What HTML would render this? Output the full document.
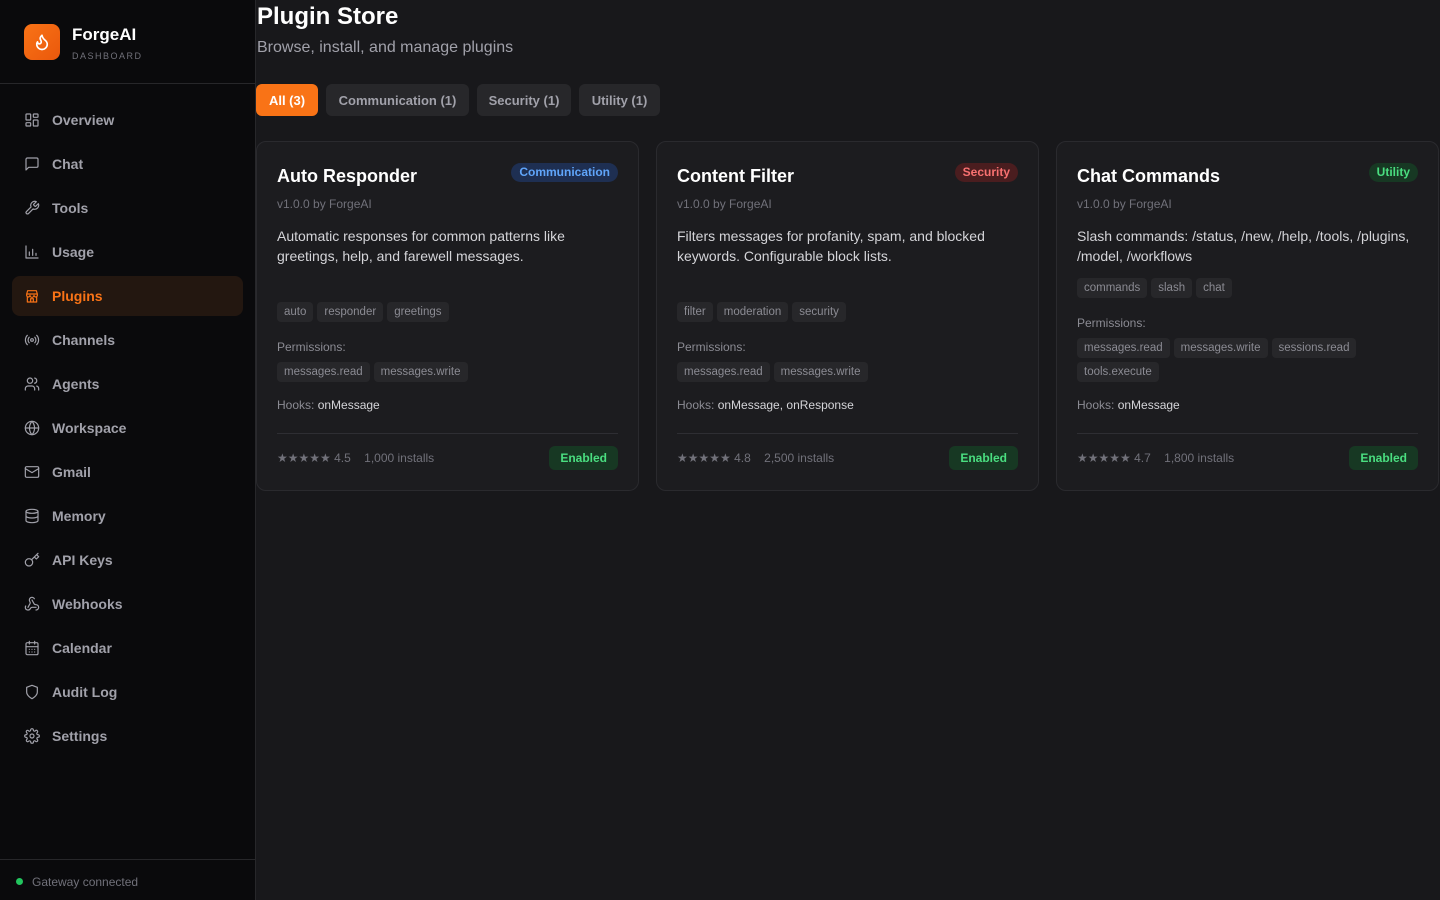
<!DOCTYPE html>
<html><head><meta charset="utf-8"><style>
*{box-sizing:border-box;margin:0;padding:0}
body{width:1440px;height:900px;background:#18181b;font-family:"Liberation Sans",sans-serif;color:#e4e4e7;overflow:hidden;position:relative}
.side{position:absolute;left:0;top:0;width:256px;height:900px;background:#0a0a0c;border-right:1px solid #27272a}
.logo{position:absolute;left:24px;top:24px;width:36px;height:36px;border-radius:8px;background:linear-gradient(135deg,#f97316,#ea580c);display:flex;align-items:center;justify-content:center}
.brand{position:absolute;left:72px;top:25px;font-size:17px;font-weight:bold;color:#fff}
.sub{position:absolute;left:72px;top:51px;font-size:9px;letter-spacing:1.5px;color:#71717a}
.hr{position:absolute;left:0;top:83px;width:255px;border-top:1px solid #27272a}
.nav{position:absolute;left:12px;width:231px;height:40px;border-radius:8px;display:flex;align-items:center;padding-left:12px;font-size:14px;font-weight:bold;color:#a1a1aa}
.nav svg{width:16px;height:16px;margin-right:12px;stroke:#a1a1aa;fill:none;stroke-width:1.8;stroke-linecap:round;stroke-linejoin:round}
.nav.act{background:#231710;color:#f97316}.nav.act svg{stroke:#f97316}
.foot{position:absolute;left:0;top:859px;width:255px;border-top:1px solid #27272a;padding:15px 0 0 16px;font-size:12px;color:#71717a}
.foot i{display:inline-block;width:7px;height:7px;border-radius:50%;background:#22c55e;margin-right:9px;vertical-align:1px}
h1{position:absolute;left:257px;top:3px;font-size:24px;color:#fff}
.desc{position:absolute;left:257px;top:39px;font-size:16px;color:#a1a1aa}
.tab{position:absolute;top:84px;height:32px;border-radius:6px;background:#27272a;color:#a1a1aa;font-size:13px;font-weight:bold;display:flex;align-items:center;justify-content:center;white-space:nowrap}
.card{position:absolute;top:141px;width:383px;height:350px;border:1px solid #2a2a2e;border-radius:10px;background:#1c1c1f;padding:20px}
.card h3{font-size:18px;line-height:28px;color:#fff}
.badge{position:absolute;right:20px;top:21px;height:19px;border-radius:10px;font-size:12px;font-weight:bold;padding:0 8px;line-height:19px}
.ver{margin-top:5px;font-size:12px;line-height:18px;color:#71717a}
.d{margin-top:13px;font-size:14px;line-height:20px;color:#d4d4d8;height:40px}
.tags span{display:inline-block;height:20px;line-height:20px;padding:0 7px;background:#27272a;color:#8b8b93;font-size:11.5px;border-radius:4px;margin-right:4px;margin-bottom:4px}
.lab{font-size:12px;line-height:18px;color:#8b8b93}
.hooks{position:absolute;left:20px;top:256px;font-size:12px;color:#8b8b93}.hooks b{font-weight:normal;color:#d4d4d8}
.div{position:absolute;left:20px;right:20px;top:291px;border-top:1px solid #2e2e33}
.rate{position:absolute;left:20px;top:309px;font-size:12px;color:#71717a}
.en{position:absolute;right:20px;top:304px;height:24px;line-height:24px;padding:0 11px;border-radius:6px;background:#173823;color:#4ade80;font-size:12px;font-weight:bold}
</style></head><body>
<div class="side">
<div class="logo"><svg width="18" height="18" viewBox="0 0 24 24" fill="none" stroke="#fff" stroke-width="2.2" stroke-linecap="round" stroke-linejoin="round"><path d="M8.5 14.5A2.5 2.5 0 0 0 11 12c0-1.4-.5-2-1-3-1.1-2.1-.2-4 2-6 .5 2.5 2 4.9 4 6.5 2 1.6 3 3.5 3 5.5a7 7 0 1 1-14 0c0-1.2.4-2.3 1-3.2.2 1.5 1.2 2.7 2.5 2.7z"/></svg></div>
<div class="brand">ForgeAI</div><div class="sub">DASHBOARD</div>
<div class="hr"></div>
<div class="nav" style="top:100px"><svg viewBox="0 0 24 24"><rect x="3" y="3" width="7" height="9" rx="1"/><rect x="14" y="3" width="7" height="5" rx="1"/><rect x="14" y="12" width="7" height="9" rx="1"/><rect x="3" y="16" width="7" height="5" rx="1"/></svg>Overview</div>
<div class="nav" style="top:144px"><svg viewBox="0 0 24 24"><path d="M21 15a2 2 0 0 1-2 2H7l-4 4V5a2 2 0 0 1 2-2h14a2 2 0 0 1 2 2z"/></svg>Chat</div>
<div class="nav" style="top:188px"><svg viewBox="0 0 24 24"><path d="M14.7 6.3a1 1 0 0 0 0 1.4l1.6 1.6a1 1 0 0 0 1.4 0l3.8-3.8a6 6 0 0 1-7.9 7.9l-6.9 6.9a2.1 2.1 0 0 1-3-3l6.9-6.9a6 6 0 0 1 7.9-7.9z"/></svg>Tools</div>
<div class="nav" style="top:232px"><svg viewBox="0 0 24 24"><path d="M3 3v18h18M8 17v-5M13 17V8M18 17v-3"/></svg>Usage</div>
<div class="nav act" style="top:276px"><svg viewBox="0 0 24 24"><path d="M4 9l1.5-5h13L20 9M4 9h16v2a2.5 2.5 0 0 1-5 0 2.5 2.5 0 0 1-6 0 2.5 2.5 0 0 1-5 0zM5 13v8h14v-8M10 21v-5h4v5"/></svg>Plugins</div>
<div class="nav" style="top:320px"><svg viewBox="0 0 24 24"><circle cx="12" cy="12" r="2"/><path d="M16.2 7.8a6 6 0 0 1 0 8.4M7.8 16.2a6 6 0 0 1 0-8.4M19 5a10 10 0 0 1 0 14M5 19A10 10 0 0 1 5 5"/></svg>Channels</div>
<div class="nav" style="top:364px"><svg viewBox="0 0 24 24"><circle cx="9" cy="7" r="4"/><path d="M2 21v-2a4 4 0 0 1 4-4h6a4 4 0 0 1 4 4v2M16 3.1a4 4 0 0 1 0 7.8M22 21v-2a4 4 0 0 0-3-3.9"/></svg>Agents</div>
<div class="nav" style="top:408px"><svg viewBox="0 0 24 24"><circle cx="12" cy="12" r="10"/><path d="M2 12h20M12 2a15 15 0 0 1 0 20M12 2a15 15 0 0 0 0 20"/></svg>Workspace</div>
<div class="nav" style="top:452px"><svg viewBox="0 0 24 24"><rect x="2" y="4" width="20" height="16" rx="2"/><path d="M22 7l-10 6L2 7"/></svg>Gmail</div>
<div class="nav" style="top:496px"><svg viewBox="0 0 24 24"><ellipse cx="12" cy="5" rx="9" ry="3"/><path d="M3 5v14c0 1.7 4 3 9 3s9-1.3 9-3V5M3 12c0 1.7 4 3 9 3s9-1.3 9-3"/></svg>Memory</div>
<div class="nav" style="top:540px"><svg viewBox="0 0 24 24"><circle cx="7.5" cy="15.5" r="5.5"/><path d="M21 2l-9.6 9.6M15.5 7.5l3 3L22 7l-3-3"/></svg>API Keys</div>
<div class="nav" style="top:584px"><svg viewBox="0 0 24 24"><path d="M18 16.98h-5.99c-1.1 0-1.950.94-2.48 1.9A4 4 0 0 1 2 17c.01-.7.2-1.4.57-2M6 17l3.13-5.78c.53-.97.1-2.18-.5-3.1a4 4 0 1 1 6.89-4.06M12 6l3.13 5.73C15.66 12.7 16.9 13 18 13a4 4 0 0 1 0 8"/></svg>Webhooks</div>
<div class="nav" style="top:628px"><svg viewBox="0 0 24 24"><rect x="3" y="4" width="18" height="18" rx="2"/><path d="M16 2v4M8 2v4M3 10h18M8 14h.01M12 14h.01M16 14h.01M8 18h.01M12 18h.01M16 18h.01"/></svg>Calendar</div>
<div class="nav" style="top:672px"><svg viewBox="0 0 24 24"><path d="M12 22s8-4 8-10V5l-8-3-8 3v7c0 6 8 10 8 10z"/></svg>Audit Log</div>
<div class="nav" style="top:716px"><svg viewBox="0 0 24 24"><circle cx="12" cy="12" r="3"/><path d="M19.4 15a1.7 1.7 0 0 0 .3 1.8l.1.1a2 2 0 1 1-2.8 2.8l-.1-.1a1.7 1.7 0 0 0-1.8-.3 1.7 1.7 0 0 0-1 1.5V21a2 2 0 1 1-4 0v-.1a1.7 1.7 0 0 0-1.1-1.5 1.7 1.7 0 0 0-1.800.3l-.1.1a2 2 0 1 1-2.8-2.8l.1-.1a1.7 1.7 0 0 0 .3-1.8 1.7 1.7 0 0 0-1.5-1H3a2 2 0 1 1 0-4h.1a1.7 1.7 0 0 0 1.5-1.1 1.7 1.7 0 0 0-.3-1.8l-.1-.1a2 2 0 1 1 2.8-2.8l.1.1a1.7 1.7 0 0 0 1.8.3H9a1.7 1.7 0 0 0 1-1.5V3a2 2 0 1 1 4 0v.1a1.7 1.7 0 0 0 1 1.5 1.7 1.7 0 0 0 1.8-.3l.1-.1a2 2 0 1 1 2.8 2.8l-.1.1a1.7 1.7 0 0 0-.3 1.8V9a1.7 1.7 0 0 0 1.5 1H21a2 2 0 1 1 0 4h-.1a1.7 1.7 0 0 0-1.5 1z"/></svg>Settings</div>
<div class="foot"><i></i>Gateway connected</div>
</div>
<h1>Plugin Store</h1>
<div class="desc">Browse, install, and manage plugins</div>
<div class="tab" style="left:256px;width:62px;background:#f97316;color:#fff">All (3)</div>
<div class="tab" style="left:326px;width:143px">Communication (1)</div>
<div class="tab" style="left:477px;width:94px">Security (1)</div>
<div class="tab" style="left:579px;width:81px">Utility (1)</div>

<div class="card" style="left:256px">
<span class="badge" style="background:#1e2f52;color:#60a5fa">Communication</span>
<h3>Auto Responder</h3><div class="ver">v1.0.0 by ForgeAI</div>
<div class="d">Automatic responses for common patterns like greetings, help, and farewell messages.</div>
<div class="tags" style="margin-top:36px"><span>auto</span><span>responder</span><span>greetings</span></div>
<div class="lab" style="margin-top:12px">Permissions:</div>
<div class="tags" style="margin-top:6px"><span>messages.read</span><span>messages.write</span></div>
<div class="hooks">Hooks: <b>onMessage</b></div><div class="div"></div>
<div class="rate">★★★★★ 4.5 &nbsp;&nbsp; 1,000 installs</div><div class="en">Enabled</div></div>

<div class="card" style="left:656px">
<span class="badge" style="background:#4a1d1f;color:#f87171">Security</span>
<h3>Content Filter</h3><div class="ver">v1.0.0 by ForgeAI</div>
<div class="d">Filters messages for profanity, spam, and blocked keywords. Configurable block lists.</div>
<div class="tags" style="margin-top:36px"><span>filter</span><span>moderation</span><span>security</span></div>
<div class="lab" style="margin-top:12px">Permissions:</div>
<div class="tags" style="margin-top:6px"><span>messages.read</span><span>messages.write</span></div>
<div class="hooks">Hooks: <b>onMessage, onResponse</b></div><div class="div"></div>
<div class="rate">★★★★★ 4.8 &nbsp;&nbsp; 2,500 installs</div><div class="en">Enabled</div></div>

<div class="card" style="left:1056px">
<span class="badge" style="background:#173823;color:#4ade80">Utility</span>
<h3>Chat Commands</h3><div class="ver">v1.0.0 by ForgeAI</div>
<div class="d">Slash commands: /status, /new, /help, /tools, /plugins, /model, /workflows</div>
<div class="tags" style="margin-top:12px"><span>commands</span><span>slash</span><span>chat</span></div>
<div class="lab" style="margin-top:12px">Permissions:</div>
<div class="tags" style="margin-top:6px"><span>messages.read</span><span>messages.write</span><span>sessions.read</span><span>tools.execute</span></div>
<div class="hooks">Hooks: <b>onMessage</b></div><div class="div"></div>
<div class="rate">★★★★★ 4.7 &nbsp;&nbsp; 1,800 installs</div><div class="en">Enabled</div></div>
</body></html>
